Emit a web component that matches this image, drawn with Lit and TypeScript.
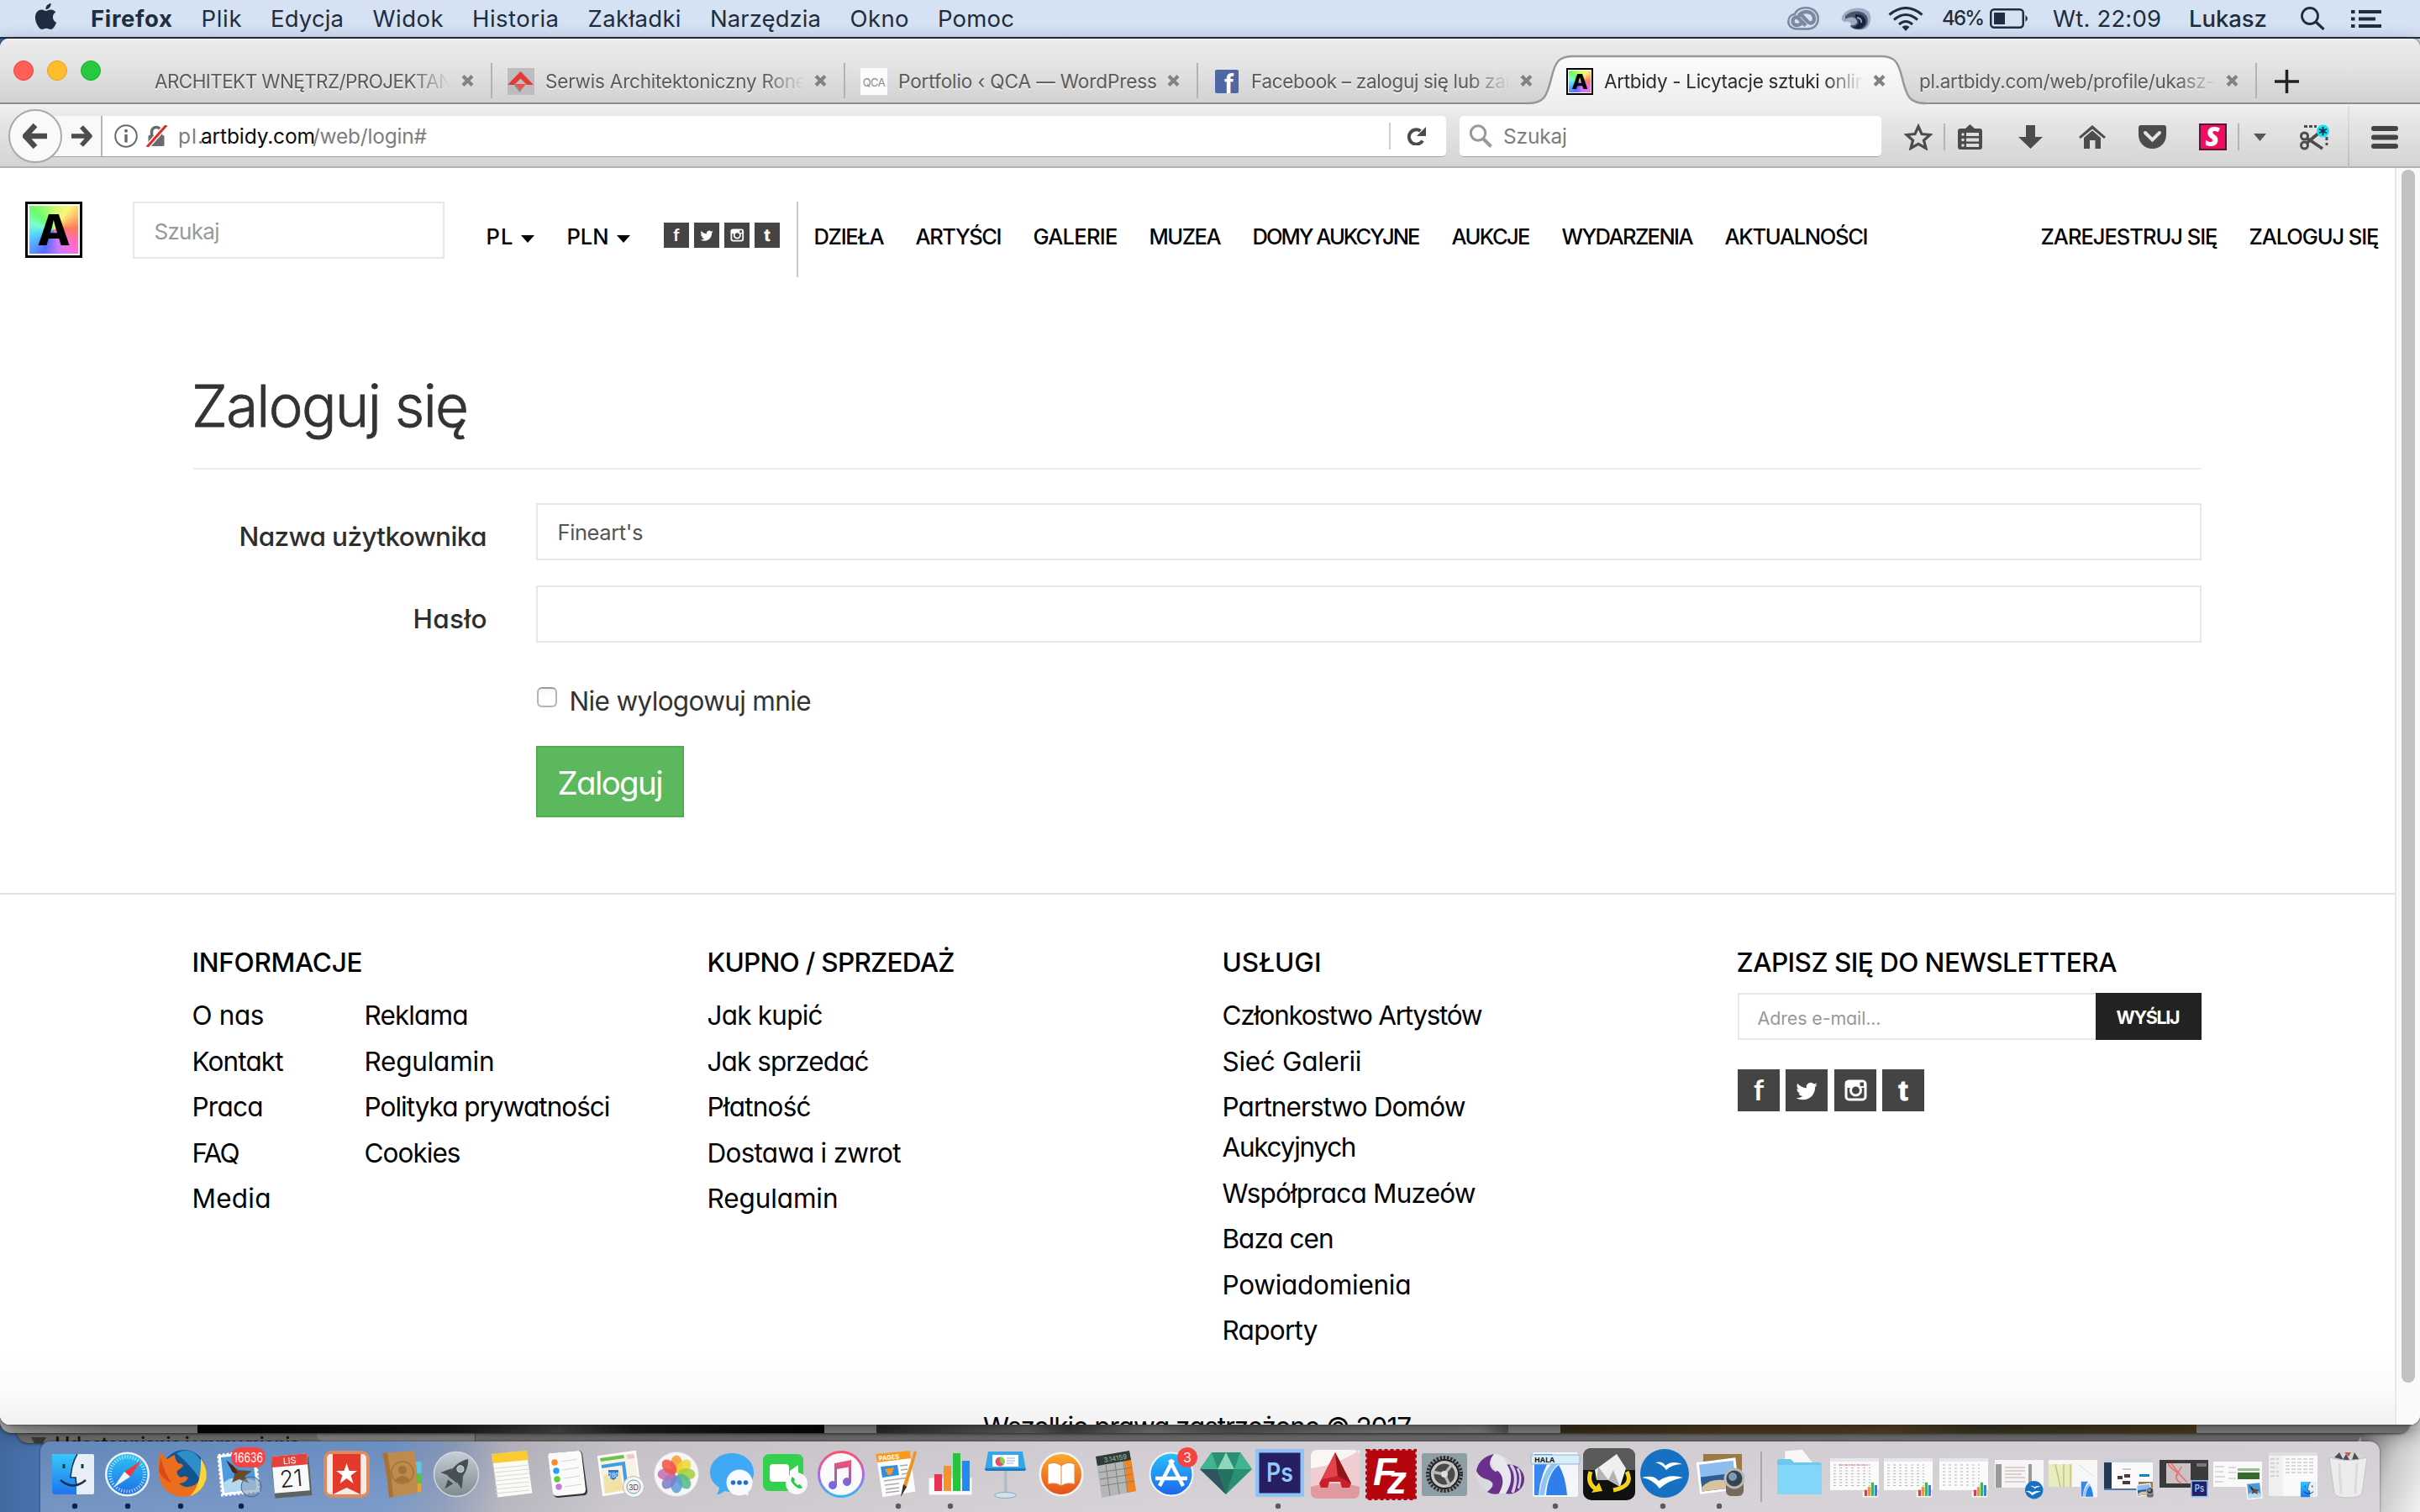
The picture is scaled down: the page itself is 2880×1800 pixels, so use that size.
import { LitElement, html, svg, css, nothing } from "lit";
import { customElement, property } from "lit/decorators.js";
import { classMap } from "lit/directives/class-map.js";

/** One line of text whose tracking is tuned so that it fills a given width. */
@customElement("fit-text")
class FitText extends LitElement {
  @property() text = "";
  @property({ type: Number }) w = 0;
  static styles = css`
    :host { display: inline-block; white-space: pre; flex: none; }
    .run { display: inline-block; margin-left: var(--bearing, 0px); }
  `;
  updated() {
    const run = this.renderRoot.querySelector(".run") as HTMLElement;
    run.style.letterSpacing = "0px";
    const natural = run.getBoundingClientRect().width;
    const n = Math.max(1, [...this.text].length - 1);
    run.style.letterSpacing = (this.w + 3 - natural) / n + "px";
    this.style.width = this.w + "px";
  }
  render() {
    return html`<span class="run">${this.text}</span>`;
  }
}

const fit = (text: string, w: number) => html`<fit-text .text=${text} .w=${w}></fit-text>`;
const icon = (w: number, h: number, body: unknown, box = `0 0 ${w} ${h}`) =>
  html`<svg class="ic" width=${w} height=${h} viewBox=${box}>${body}</svg>`;

const BIRD =
  "M23.953 4.57a10 10 0 01-2.825.775 4.958 4.958 0 002.163-2.723c-.951.555-2.005.959-3.127 1.184a4.92 4.92 0 00-8.384 4.482C7.69 8.095 4.067 6.13 1.64 3.162a4.822 4.822 0 00-.666 2.475c0 1.71.87 3.213 2.188 4.096a4.904 4.904 0 01-2.228-.616v.06a4.923 4.923 0 003.946 4.827 4.996 4.996 0 01-2.212.085 4.936 4.936 0 004.604 3.417 9.867 9.867 0 01-6.102 2.105c-.39 0-.779-.023-1.17-.067a13.995 13.995 0 007.557 2.209c9.053 0 13.998-7.496 13.998-13.985 0-.21 0-.42-.015-.63A9.935 9.935 0 0024 4.59z";
const APPLE =
  "M12.152 6.896c-.948 0-2.415-1.078-3.96-1.04-2.04.027-3.91 1.183-4.961 3.014-2.117 3.675-.546 9.103 1.519 12.09 1.013 1.454 2.208 3.09 3.792 3.039 1.52-.065 2.09-.987 3.935-.987 1.831 0 2.35.987 3.96.948 1.637-.026 2.676-1.48 3.676-2.948 1.156-1.688 1.636-3.325 1.662-3.415-.039-.013-3.182-1.221-3.22-4.857-.026-3.04 2.48-4.494 2.597-4.559-1.429-2.09-3.623-2.324-4.39-2.376-2-.156-3.675 1.09-4.61 1.09zM15.53 3.83c.843-1.012 1.4-2.427 1.245-3.83-1.207.052-2.662.805-3.532 1.818-.78.896-1.454 2.338-1.273 3.714 1.338.104 2.715-.688 3.559-1.701";

/* ------------------------------------------------------------ menu bar */

@customElement("menu-bar")
class MenuBar extends LitElement {
  static styles = css`
    :host { display: flex; align-items: center; height: 44px; background: #d5e2f4; color: #1f2d40;
      border-bottom: 2px solid #1b2f4f; font: 400 27.5px/44px Inter, "Liberation Sans", sans-serif; box-sizing: content-box; }
    .ic { display: block; flex: none; }
    .apple { padding: 0 38px 5px 39px; }
    .menus { display: flex; gap: 37.5px; }
    .app { font-weight: 700; }
    .status { display: flex; align-items: center; margin-left: auto; padding-right: 46px; }
    .cc { margin-right: 25px; }
    .eye { margin-right: 20px; }
    .wifi { margin-right: 23px; }
    .pct { font-size: 24px; font-weight: 500; margin-right: 8px; --bearing: -1px; }
    .bat { margin-right: 29px; }
    .clock { margin-right: 36px; }
    .user { font-weight: 500; margin-right: 43px; }
    .find { margin-right: 31px; }
  `;
  render() {
    const menus: [string, number][] = [["Plik", 45], ["Edycja", 84], ["Widok", 81], ["Historia", 100], ["Zakładki", 108], ["Narzędzia", 129], ["Okno", 67], ["Pomoc", 88]];
    return html`
      <div class="apple">${icon(31, 31, svg`<path fill="#1f2d40" d=${APPLE}/>`, "0 0 24 24")}</div>
      <div class="menus">
        <span class="app">${fit("Firefox", 94)}</span>
        ${menus.map(([t, w]) => fit(t, w))}
      </div>
      <div class="status">
        <span class="cc">${icon(38, 28, svg`<g fill="none" stroke="#7c8aa0">
          <path stroke-width="2.600" d="M12 26.500C5 26.500 1.300 22.500 1.300 17.500C1.300 12 5.500 9.300 9 8.800C11 4 16 1.300 22 1.300C31 1.300 36.700 7 36.700 14C36.700 21.500 31.500 26.500 24 26.500Z"/>
          <path stroke-width="4.400" d="M22 22.500L13 13.500C9.500 11 6.500 14 6.500 17.500C6.500 20.500 9 22 12 22C14 22 15.500 21 17 19.500"/>
          <path stroke-width="4.400" d="M17 10L25 18.500C29 21 32 18 32 14C32 9.500 28 6 23 6C18 6 15 8.500 13.500 11.500"/></g>`)}</span>
        <span class="eye">${icon(37, 28, svg`<path d="M2 12C6 2 24-2 33 5C38 10 37 20 32 25C27 29 15 28 12 24C14 21 12 17 7 18C2 18 1 15 2 12Z" fill="#9dacc2"/>
          <path d="M6 11C14 3 28 4 32 12C35 20 30 27 22 27C17 27 13 25 12 22C20 23 22 18 18 14C14 11 9 13 6 15Z" fill="#45556d"/>
          <path d="M18 9C26 8 32 14 30 20C28 26 20 28 15 24C22 23 25 17 18 13Z" fill="#17233a"/><path d="M20 13q6 1 5 6" fill="none" stroke="#8fa0b8" stroke-width="2"/>`)}</span>
        <span class="wifi">${icon(42, 29, svg`<g fill="none" stroke="#1f2d40" stroke-width="3"><path d="M1.500 9.500Q21-6.500 40.500 9.500"/><path d="M7 15.500Q21 3.500 35 15.500"/><path d="M13 21Q21 14 29 21"/></g><path d="M21 29l-4.500-5q4.500-3.500 9 0z" fill="#1f2d40"/>`)}</span>
        <span class="pct">${fit("46%", 48)}</span>
        <span class="bat">${icon(46, 24, svg`<rect x="1.250" y="1.250" width="38.500" height="21.500" rx="4" fill="none" stroke="#1f2d40" stroke-width="2.500"/><rect x="5" y="5" width="13" height="14" fill="#1f2d40"/><path d="M42.500 8q5 4 0 8z" fill="#1f2d40"/>`)}</span>
        <span class="clock">${fit("Wt. 22:09", 126)}</span>
        <span class="user">${fit("Lukasz", 90)}</span>
        <span class="find">${icon(29, 28, svg`<circle cx="11" cy="11" r="9.500" fill="none" stroke="#1f2d40" stroke-width="2.800"/><path d="M18 18l9.500 9" stroke="#1f2d40" stroke-width="3.200"/>`)}</span>
        ${icon(36, 21, svg`<g fill="#1f2d40"><rect width="4.500" height="4"/><rect x="9" width="27" height="4"/><rect y="8.500" width="4.500" height="4"/><rect x="9" y="8.500" width="20" height="4"/><rect y="17" width="4.500" height="4"/><rect x="9" y="17" width="27" height="4"/></g>`)}
      </div>`;
  }
}

/* ------------------------------------------------------ artbidy emblem */

@customElement("art-mark")
class ArtMark extends LitElement {
  static styles = css`
    :host { display: block; box-sizing: border-box; width: 68px; height: 67px; border: 3px solid #000; padding: 2px; background: #fff; flex: none; }
    .hue { width: 100%; height: 100%; display: flex; align-items: center; justify-content: center; color: #000;
      background: conic-gradient(#c9fb70, #fdf57a 35deg, #ff7a5a 85deg, #ff6ad5 130deg, #c97aff 165deg, #5a6bff 205deg, #55d4ff 255deg, #7bffca 285deg, #6dfb6b 315deg, #c9fb70);
      font: 800 51px/56px Inter, "Liberation Sans", sans-serif; }
    :host([small]) { width: 32px; height: 32px; border-width: 2px; padding: 1px; }
    :host([small]) .hue { font-size: 25px; line-height: 26px; }
  `;
  render() { return html`<div class="hue">A</div>`; }
}

/* --------------------------------------------------------- browser top */

@customElement("tab-strip")
class TabStrip extends LitElement {
  static styles = css`
    :host { display: flex; box-sizing: border-box; padding-left: 16px; background: linear-gradient(#f4f4f4 0, #ebebeb 4px, #e4e4e4 40%, #d2d2d2 100%);
      border-bottom: 2px solid #8e8e8e; height: 78px; font: 400 22.5px/50px Inter, "Liberation Sans", sans-serif; color: #5b5b5b; }
    .lights { display: flex; gap: 16px; width: 149px; padding-top: 26px; }
    .dot { width: 24px; height: 24px; border-radius: 50%; box-sizing: border-box; border: 1px solid #e2463f; background: #ff5f57; }
    .min { background: #ffbd2e; border-color: #dfa023; }
    .max { background: #28c940; border-color: #1bac2c; }
    .tab { position: relative; display: flex; align-items: center; width: 420px; height: 50px; margin-top: 26px; box-sizing: border-box; padding: 0 21px 0 19px; }
    .tab.line::after { content: ""; position: absolute; right: -1px; top: 3px; width: 2px; height: 42px; background: #b3b3b3; }
    .fav { margin-right: 13px; width: 32px; flex: none; display: flex; justify-content: center; position: relative; }
    .label { position: relative; text-shadow: 0 2px 0 #eee; }
    .label.fade { -webkit-mask-image: linear-gradient(90deg, #000 calc(100% - 48px), transparent); mask-image: linear-gradient(90deg, #000 calc(100% - 48px), transparent); }
    .x { margin-left: auto; position: relative; margin-bottom: 2px; }
    .active { color: #2c2c2c; }
    .hump { position: absolute; left: -35px; top: -8px; display: block; }
    .ic { display: block; }
    .plus { margin: 37px 0 0 22px; }
    .qca { width: 32px; height: 32px; background: #fcfcfc; color: #8b8b8b; font-size: 13px; line-height: 34px; text-align: center; letter-spacing: -.5px; }
  `;
  fav(kind: string) {
    if (kind === "ronet") return icon(32, 32, svg`<rect width="32" height="32" fill="#bdbdbf"/><path d="M15.500 4L31 20H23L15.500 12.500L8 20H0Z" fill="#e23b36"/><path d="M9 19h13l-6.500 8z" fill="#e8544c"/><path d="M9 20l6 8" stroke="#888" stroke-width="2"/>`);
    if (kind === "qca") return html`<div class="qca">QCA</div>`;
    if (kind === "fb") return icon(28, 28, svg`<rect width="28" height="28" rx="2" fill="#4f67a4"/><text x="11" y="28" font-family="Roboto" font-weight="700" font-size="31" fill="#fff">f</text>`);
    if (kind === "art") return html`<art-mark small></art-mark>`;
    return nothing;
  }
  render() {
    const tabs: [string, number, string, boolean, boolean][] = [
      ["ARCHITEKT WNĘTRZ/PROJEKTAN", 352, "", true, true],
      ["Serwis Architektoniczny Rone", 308, "ronet", true, true],
      ["Portfolio ‹ QCA — WordPress", 305, "qca", false, true],
      ["Facebook – zaloguj się lub zar", 308, "fb", true, false],
      ["Artbidy - Licytacje sztuki onlin", 309, "art", true, false],
      ["pl.artbidy.com/web/profile/ukasz-l", 354, "", true, true],
    ];
    return html`
      <div class="lights"><div class="dot"></div><div class="dot min"></div><div class="dot max"></div></div>
      ${tabs.map(([t, w, f, fade, line]) => html`
        <div class=${classMap({ tab: true, line, active: f === "art" })}>
          ${f === "art" ? html`<svg class="hump" width="490" height="62" viewBox="0 0 490 62">
            <defs><linearGradient id="hg" x2="0" y2="1"><stop stop-color="#fbfbfb"/><stop offset="1" stop-color="#eee"/></linearGradient></defs>
            <path d="M8 60C28 60 31 50 36 30C41 10 46 4 62 4H428C444 4 449 10 454 30C459 50 462 60 482 60V62H8Z" fill="url(#hg)"/>
            <path d="M8 59C28 59 31 50 36 30C41 8 46 3 62 3H428C444 3 449 8 454 30C459 50 462 59 482 59" fill="none" stroke="#979797" stroke-width="2.500"/></svg>` : nothing}
          ${f ? html`<div class="fav">${this.fav(f)}</div>` : nothing}
          <div class=${classMap({ label: true, fade })}>${fit(t, w)}</div>
          <div class="x">${icon(15, 14, svg`<path d="M2 1.500L13 12.500M13 1.500L2 12.500" stroke="#828282" stroke-width="4"/>`)}</div>
        </div>`)}
      <div class="plus">${icon(29, 28, svg`<path d="M14.500 0V28M0 14H29" stroke="#222" stroke-width="3.500"/>`)}</div>`;
  }
}

@customElement("tool-bar")
class ToolBar extends LitElement {
  static styles = css`
    :host { display: flex; height: 76px; box-sizing: border-box; border-bottom: 2px solid #b2b2b2; background: linear-gradient(#f2f2f2 0, #e9e9e9 12px, #d4d4d4 100%);
      font: 400 24.500px/48px Inter, "Liberation Sans", sans-serif; color: #7d7d7d; align-items: flex-start; }
    .ic { display: block; flex: none; }
    .back { position: relative; z-index: 1; width: 64px; height: 64px; margin: 6px -12px 0 10px; box-sizing: border-box; border: 2px solid #a9a9a9; border-radius: 50%; background: #fafafa; display: flex; align-items: center; justify-content: center; flex: none; }
    .url, .search { display: flex; align-items: center; height: 48px; margin-top: 14px; background: #fff; border-radius: 5px; border-bottom: 1px solid #a4a4a4; }
    .url { width: 1659px; border-radius: 0 5px 5px 0; flex: none; }
    .fwd { width: 60px; height: 48px; background: #f9f9f9; border-right: 2px solid #b5b5b5; display: flex; align-items: center; padding-left: 22px; box-sizing: border-box; margin-right: 14px; }
    .lock { margin: 0 13px 0 9px; }
    .host { color: #0a0a0a; }
    .reload { margin-left: auto; border-left: 2px solid #cfcfcf; padding: 5px 23px 5px 19px; }
    .search { width: 503px; margin-left: 16px; box-sizing: content-box; }
    .mag { margin: 0 13px 0 11px; }
    .tools { display: flex; align-items: center; height: 74px; flex: 1; padding: 2px 26px 0 27px; }
    .sep { width: 2px; height: 32px; background: #b5b5b5; }
    .tall { width: 2px; height: 74px; background: linear-gradient(#e2e2e2, #bcbcbc); margin: 0 26px 0 22px; }
    .a { margin: 0 15px 0 13px; } .b { margin-left: 43px; } .c { margin: 0 39px; } .s { margin-left: 13px; } .e { margin: 0 40px 0 17px; }
  `;
  render() {
    const g = "#4c4c4c";
    return html`
      <div class="back">${icon(30, 30, svg`<path d="M15 2L3 15L15 28M4 15H29" fill="none" stroke=${g} stroke-width="6.500" stroke-linejoin="round"/>`)}</div>
      <div class="url">
        <div class="fwd">${icon(26, 26, svg`<path d="M13 2L23 13L13 24M1 13H22" fill="none" stroke=${g} stroke-width="5.500" stroke-linejoin="round"/>`)}</div>
        ${icon(28, 28, svg`<circle cx="14" cy="14" r="12.800" fill="none" stroke="#696969" stroke-width="2"/><path d="M14 12V21.500" stroke="#696969" stroke-width="3.400"/><circle cx="14" cy="7.800" r="2" fill="#696969"/>`)}
        <div class="lock">${icon(26, 26, svg`<rect x="3.500" y="12" width="19" height="13" rx="1.500" fill="#6b6b6b"/><path d="M7.500 12V8a5.500 5.500 0 0 1 11 0v4" fill="none" stroke="#6b6b6b" stroke-width="3.600"/><path d="M25 0L2 26" stroke="#fff" stroke-width="6"/><path d="M25 0L2 26" stroke="#e02a22" stroke-width="3"/>`)}</div>
        ${fit("pl.", 27)}<span class="host">${fit("artbidy.com", 133)}</span>${fit("/web/login#", 133)}
        <div class="reload">${icon(24, 22, svg`<path d="M19 16.500A8.700 8.700 0 1 1 16.500 4.800" fill="none" stroke=${g} stroke-width="4"/><path d="M23 0V11H12Z" fill=${g}/>`)}</div>
      </div>
      <div class="search"><div class="mag">${icon(28, 28, svg`<circle cx="11" cy="10.500" r="8.700" fill="none" stroke="#999" stroke-width="3"/><path d="M17 17l9.500 9.500" stroke="#999" stroke-width="4"/>`)}</div>${fit("Szukaj", 73)}</div>
      <div class="tools">
        ${icon(34, 32, svg`<path d="M17 3.500L21 12.500L31 13.500L23.500 20L26 29.500L17 24.300L8 29.500L10.500 20L3 13.500L13 12.500Z" fill="none" stroke=${g} stroke-width="3.200"/>`)}
        <div class="sep a"></div>
        ${icon(29, 30, svg`<path d="M3 5H9L14.500 0L20 5H26Q29 5 29 8V27Q29 30 26 30H3Q0 30 0 27V8Q0 5 3 5Z" fill=${g}/><g fill="#dedede"><circle cx="6" cy="12" r="1.800"/><circle cx="6" cy="18.500" r="1.800"/><circle cx="6" cy="25" r="1.800"/><rect x="10" y="10" width="15" height="4"/><rect x="10" y="16.500" width="15" height="4"/><rect x="10" y="23" width="15" height="4"/></g>`)}
        <div class="b">${icon(29, 28, svg`<path d="M9 0H20V14H29L14.500 28L0 14H9Z" fill=${g}/>`)}</div>
        <div class="b">${icon(32, 28, svg`<path d="M16 0L32 14L30 16L16 4.500L2 16L0 14Z" fill=${g}/><path d="M16 6.500L26 15V28H19.500V18H13V28H6V15Z" fill=${g}/>`)}</div>
        <div class="c">${icon(33, 28, svg`<path d="M3 0H30Q33 0 33 3V11C33 21 26 28 16.500 28C7 28 0 21 0 11V3Q0 0 3 0Z" fill=${g}/><path d="M8 9L16.500 17.500L25 9" fill="none" stroke="#e4e4e4" stroke-width="4" stroke-linecap="round"/>`)}</div>
        <div>${icon(33, 32, svg`<rect x="1" y="1" width="31" height="30" fill="#ef0d63" stroke="#5e1334" stroke-width="2"/><text x="16" y="27" text-anchor="middle" font-family="Open Sans" font-style="italic" font-weight="800" font-size="31" fill="#fff">S</text>`)}</div>
        <div class="sep s"></div>
        <div class="e">${icon(15, 9, svg`<path d="M0 0H15L7.500 9Z" fill="#565656"/>`)}</div>
        ${icon(35, 32, svg`<g fill="none" stroke=${g} stroke-width="3"><circle cx="5.500" cy="15" r="4"/><circle cx="5.500" cy="26" r="4"/><path d="M8.500 23L23 11M8.500 17.500L27 30" stroke-width="3.600"/><path d="M5 3.500H20" stroke-dasharray="4 2"/><path d="M32 16V26" stroke-dasharray="4 3"/></g><circle cx="27.500" cy="9" r="7.500" fill="#12e3f0"/><path d="M27.500 4V14M23 6.500L32 11.500M32 6.500L23 11.500" stroke="#135" stroke-width="2"/>`)}
        <div class="tall"></div>
        ${icon(32, 27, svg`<g fill="#444"><rect width="32" height="6" rx="3"/><rect y="10.500" width="32" height="6" rx="3"/><rect y="21" width="32" height="6" rx="3"/></g>`)}
      </div>`;
  }
}

/* ------------------------------------------------------------ web page */

@customElement("social-links")
class SocialLinks extends LitElement {
  @property({ type: Number }) size = 30;
  @property({ type: Number }) gap = 6;
  static styles = css`
    :host { display: block; }
    .row { display: flex; }
    .ic { display: block; background: #444; }
  `;
  render() {
    const marks = [
      svg`<text x="25" y="37" text-anchor="middle" font-family="Lato" font-weight="700" font-size="34" fill="#fff">f</text>`,
      svg`<g transform="translate(12.500 13.500) scale(1.050)"><path d=${BIRD} fill="#fff"/></g>`,
      svg`<rect x="14" y="14" width="23" height="22" rx="3.500" fill="none" stroke="#fff" stroke-width="3"/><path d="M13 14h24v8h-24z" fill="#fff"/><rect x="30.500" y="15.500" width="4.500" height="4.500" fill="#444"/><circle cx="25.500" cy="25" r="6" fill="#444" stroke="#fff" stroke-width="3"/>`,
      svg`<text x="25" y="37" text-anchor="middle" font-family="Liberation Sans" font-weight="700" font-size="34" stroke="#fff" stroke-width="1" fill="#fff">t</text>`,
    ];
    return html`<div class="row" style="gap:${this.gap}px">${marks.map((m) => icon(this.size, this.size, m, "0 0 50 50"))}</div>`;
  }
}

@customElement("web-page")
class WebPage extends LitElement {
  static styles = css`
    :host { display: grid; grid-template-columns: 2850px 30px; height: 1496px; background: #fff; overflow: hidden; color: #000;
      font: 400 31.500px/48px Inter, "Liberation Sans", sans-serif; font-feature-settings: "cv11" 1; --bearing: -1.5px; }
    * { box-sizing: border-box; }
    .view { height: 1496px; overflow: hidden; background: linear-gradient(#fff 1410px, #fbfbfb 1455px, #f2f2f2 1496px); }
    .scroll { border-left: 2px solid #e8e8e8; background: #fafafa; padding: 2px 0 0 6px; }
    .thumb { width: 16px; height: 1444px; border-radius: 8px; background: #c1c1c1; }
    .ic { display: block; }
    header { display: flex; align-items: flex-start; padding: 40px 20px 0 30px; height: 130px; font: 500 25.500px/40px Inter, sans-serif; }
    .find { width: 371px; height: 68px; margin-left: 60px; border: 2px solid #e7e7e7; padding: 0 25px; font: 400 26px/68px Inter, sans-serif; color: #999; }
    .pick { display: flex; gap: 11px; padding-top: 22px; }
    .pick .ic { margin-top: 18px; }
    .pl { margin: 0 40px 0 51px; }
    .soc { margin: 25px 20px 0 40px; }
    .rule { width: 2px; height: 90px; background: #c8c8c8; margin-right: 20px; }
    nav { display: flex; gap: 40px; padding-top: 22px; }
    .account { margin-left: auto; }
    .form { width: 2390px; margin: 113px 0 0 230px; color: #333; }
    h1 { margin: 0; font: 300 69px/80px Inter, sans-serif; height: 116px; border-bottom: 2px solid #eee; -webkit-text-stroke: .8px #333; --bearing: -2px; }
    .row { display: grid; grid-template-columns: 348px 1982px; column-gap: 60px; margin-top: 30px; }
    .row.first { margin-top: 40px; }
    .row label { text-align: right; padding-top: 16px; font-weight: 500; color: #2e2e2e; }
    .box { height: 68px; border: 2px solid #e7e7e7; padding: 0 25px; font: 400 25.500px/66px Inter, sans-serif; color: #555; background: #fff; }
    .keep { display: flex; margin: 46px 0 0 409px; gap: 16px; }
    .check { width: 24px; height: 24px; border: 2px solid #b4b4b4; border-top-color: #9b9b9b; border-radius: 6px; background: linear-gradient(#f4f4f4, #fff 8px); margin-top: 7px; }
    .go { width: 176px; height: 85px; margin: 29px 0 0 408px; background: #5cb85c; border: 2px solid #4cae4c; color: #fff; padding-left: 25px; font-size: 38.500px; line-height: 84px; }
    footer { margin-top: 90px; border-top: 2px solid #e1e1e1; padding: 60px 0 0 230px; }
    .cols { display: grid; grid-template-columns: 613px 613px 612px 552px; height: 484px; }
    .h { font-weight: 500; line-height: 41px; height: 60px; }
    .links { display: flex; flex-direction: column; gap: 6.500px; }
    .pair { display: grid; grid-template-columns: 205px 1fr; }
    .links fit-text { display: block; }
    .mail { display: flex; height: 56px; margin-top: -3px; font-size: 23px; line-height: 56px; }
    .addr { width: 426px; border: 2px solid #e7e7e7; border-right: 0; padding-left: 23px; color: #999; line-height: 56px; font-size: 21.500px; }
    .send { width: 126px; background: #222; color: #fff; font-weight: 700; padding-left: 26px; font-size: 21.500px; line-height: 58px; }
    .fsoc { margin-top: 35px; }
    .copy { text-align: center; padding-right: 230px; margin-top: 66px; }
    .stack { line-height: 48px; }
  `;
  links(items: [string, number][]) {
    return html`<div class="links">${items.map(([t, w]) => fit(t, w))}</div>`;
  }
  render() {
    const caret = icon(16, 9, svg`<path d="M0 0H16L8 9Z"/>`);
    return html`
      <div class="view">
        <header>
          <art-mark></art-mark>
          <div class="find">${fit("Szukaj", 75)}</div>
          <div class="pick pl">${fit("PL", 29)}${caret}</div>
          <div class="pick">${fit("PLN", 47)}${caret}</div>
          <social-links class="soc" .size=${30} .gap=${6}></social-links>
          <div class="rule"></div>
          <nav>${fit("DZIEŁA", 81)}${fit("ARTYŚCI", 100)}${fit("GALERIE", 98)}${fit("MUZEA", 83)}${fit("DOMY AUKCYJNE", 197)}${fit("AUKCJE", 91)}${fit("WYDARZENIA", 154)}${fit("AKTUALNOŚCI", 168)}</nav>
          <nav class="account">${fit("ZAREJESTRUJ SIĘ", 208)}${fit("ZALOGUJ SIĘ", 152)}</nav>
        </header>
        <section class="form">
          <h1>${fit("Zaloguj się", 327)}</h1>
          <div class="row first"><label>${fit("Nazwa użytkownika", 292)}</label><div class="box">${fit("Fineart's", 99)}</div></div>
          <div class="row"><label>${fit("Hasło", 85)}</label><div class="box"></div></div>
          <div class="keep"><div class="check"></div>${fit("Nie wylogowuj mnie", 285)}</div>
          <div class="go">${fit("Zaloguj", 123)}</div>
        </section>
        <footer>
          <div class="cols">
            <div><div class="h">${fit("INFORMACJE", 200)}</div><div class="pair">
              ${this.links([["O nas", 83], ["Kontakt", 106], ["Praca", 82], ["FAQ", 54], ["Media", 91]])}
              ${this.links([["Reklama", 121], ["Regulamin", 152], ["Polityka prywatności", 290], ["Cookies", 112]])}</div></div>
            <div><div class="h">${fit("KUPNO / SPRZEDAŻ", 292)}</div>
              ${this.links([["Jak kupić", 135], ["Jak sprzedać", 190], ["Płatność", 121], ["Dostawa i zwrot", 228], ["Regulamin", 153]])}</div>
            <div><div class="h">${fit("USŁUGI", 115)}</div><div class="links">
              ${fit("Członkostwo Artystów", 307)}${fit("Sieć Galerii", 163)}
              <div class="stack">${fit("Partnerstwo Domów", 287)}${fit("Aukcyjnych", 157)}</div>
              ${fit("Współpraca Muzeów", 299)}${fit("Baza cen", 130)}${fit("Powiadomienia", 222)}${fit("Raporty", 111)}</div></div>
            <div><div class="h">${fit("ZAPISZ SIĘ DO NEWSLETTERA", 450)}</div>
              <div class="mail"><div class="addr">${fit("Adres e-mail...", 144)}</div><div class="send">${fit("WYŚLIJ", 73)}</div></div>
              <social-links class="fsoc" .size=${50} .gap=${7.4}></social-links></div>
          </div>
          <div class="copy">${fit("Wszelkie prawa zastrzeżone © 2017", 507)}</div>
        </footer>
      </div>
      <div class="scroll"><div class="thumb"></div></div>`;
  }
}

/* ---------------------------------------------------------------- dock */

const bars = svg`<rect x="1" y="31" width="52" height="21" fill="#fafafa" stroke="#ccc"/><rect x="8" y="27" width="9" height="20" fill="#e8324f"/><rect x="19" y="17" width="9" height="30" fill="#f7922b"/><rect x="30" y="2" width="9" height="45" fill="#27c53d"/><rect x="41" y="11" width="9" height="36" fill="#1f8af2"/>`;
const gull = svg`<circle cx="29" cy="29" r="29" fill="#1671c2"/><path d="M18 16Q27 14 30 20Q37 13 50 18Q38 18 31 25Q26 18 18 16ZM2 34Q16 30 22 38Q34 29 51 34Q34 37 23 47Q15 36 2 34Z" fill="#fff"/>`;
const finder = svg`<rect width="50" height="48" rx="2" fill="#e7eef7"/><path d="M2 0H30C24 10 23 19 22 28H29V48H2Q0 48 0 46V2Q0 0 2 0Z" fill="url(#fb)"/><path d="M14 12v5M36 12v5" stroke="#143" stroke-width="3"/><path d="M30 0C24 10 23 19 22 28H28L29 38" fill="none" stroke="#173350" stroke-width="1.500"/><path d="M10 31Q25 44 40 31" fill="none" stroke="#173350" stroke-width="2.400"/>`;
const psIcon = svg`<rect width="58" height="57" fill="#8fc3f8"/><rect x="4.500" y="4.500" width="49" height="48" fill="#261e60"/><text x="29" y="39" text-anchor="middle" font-family="Inter" font-weight="600" font-size="31" textLength="32" lengthAdjust="spacingAndGlyphs" fill="#8fc9ff">Ps</text>`;
const eagle = svg`<g transform="rotate(-6 24 26)"><rect x="2" y="2" width="44" height="48" fill="#fff" stroke="#fff" stroke-width="3" stroke-dasharray="3 2"/><rect x="5" y="5" width="38" height="42" fill="#4c9be0"/><path d="M5 35Q20 25 43 37V47H5Z" fill="#b4daf2"/><path d="M11 9L24 22L40 25L31 30L35 39L24 33L15 36L19 27Z" fill="#6b4a2b"/><path d="M11 9L19 17L23 26L17 24Z" fill="#3d2a1c"/></g>`;
const photo = svg`<rect x="8" y="0" width="46" height="40" fill="#9c7a46"/><g transform="rotate(-7 26 28)"><rect x="2" y="7" width="47" height="38" fill="#fff"/><rect x="5" y="10" width="41" height="32" fill="#8dbdf0"/><path d="M5 25H46V42H5Z" fill="#2e5d95"/><path d="M5 37Q18 25 46 36V42H5Z" fill="#d8c2a0"/></g><rect x="35" y="30" width="21" height="20" rx="6" fill="#77695d"/><circle cx="45" cy="29" r="11" fill="#37424e" stroke="#b9b9b9" stroke-width="3"/><circle cx="43" cy="27" r="5" fill="#7f9ab5"/>`;
const arch = svg`<rect width="54" height="53" rx="2" fill="#f3f7fc"/><path d="M2 51V2H24Q9 24 7 51Z" fill="#3a86f0"/><path d="M8 51Q11 22 28 8L32 12Q16 26 14 51Z" fill="#8fc4f4"/><path d="M16 51Q18 25 31 15Q39 28 41 51Z" fill="#2f7eec"/>`;

const page = (n: number, tone = "#b8b8b8") => svg`<rect width="58" height="38" fill="#fbfbfb"/><rect width="58" height="4" fill="#e5e7ea"/><g stroke=${tone} stroke-width="1.200" stroke-dasharray="3 4">${Array.from({ length: n }, (_, i) => svg`<path d="M4 ${8 + (i * 28) / n}H48"/>`)}</g>`;

interface Item { end: number; x: number; y: number; art: unknown; dot?: boolean; }
const ITEMS: Item[] = [
  { end: 119, x: 62, y: 1731, dot: true, art: finder },
  { end: 183, x: 125, y: 1728, dot: true, art: svg`<circle cx="26.500" cy="27" r="26.500" fill="#f1f1f1"/><circle cx="26.500" cy="27" r="24" fill="url(#sf)"/><circle cx="26.500" cy="27" r="20.500" fill="none" stroke="#cfe9fb" stroke-width="4" stroke-dasharray="1 2.200"/><path d="M43 11L30 30L23 24Z" fill="#f03a3a"/><path d="M10 43L30 30L23 24Z" fill="#f3f3f3"/>` },
  { end: 252, x: 188, y: 1725, dot: true, art: svg`<circle cx="31" cy="27" r="26" fill="#13538f"/><path d="M22 5Q36-3 47 8Q58 22 50 36Q40 20 22 5Z" fill="#2d8ec8"/><path d="M3 4Q8 9 11 12Q17 8 20 7Q20 12 24 17Q29 17 30 20Q28 23 24 25Q20 29 27 34Q32 31 36 34Q33 41 25 41Q34 49 45 42Q55 34 51 13Q60 24 57 37Q51 56 31 57Q6 56 1 32Q-1 14 3 4Z" fill="#ec6d1e"/><path d="M51 11Q60 24 57 37Q52 52 38 56Q52 43 51 11Z" fill="#fcd33a"/><path d="M3 10Q8 30 16 40Q5 36 1 26Z" fill="#d84a18"/>` },
  { end: 318, x: 260, y: 1728, dot: true, art: svg`${eagle}<circle cx="39" cy="42" r="12" fill="#7e97b9" fill-opacity=".55" stroke="#48658c"/><rect x="15" y="-5" width="41" height="24" rx="12" fill="#f8423f"/><text x="35.500" y="13" text-anchor="middle" font-family="Inter" font-size="16" textLength="35" lengthAdjust="spacingAndGlyphs" fill="#fff">16636</text>` },
  { end: 379, x: 322, y: 1728, art: svg`<g transform="rotate(-5 25 27)"><path d="M2 8L3 54H47V8Z" fill="#5b6363"/><rect x="3" y="4" width="42" height="44" fill="#fafafa"/><rect x="3" y="4" width="42" height="13" fill="#e5413e"/><text x="24" y="14.500" text-anchor="middle" font-family="Inter" font-size="10.500" fill="#fff">LIS</text><text x="24" y="42" text-anchor="middle" font-family="Inter" font-weight="300" font-size="28" textLength="27" lengthAdjust="spacingAndGlyphs" fill="#222">21</text></g>` },
  { end: 448, x: 385, y: 1727, art: svg`<rect width="55" height="56" rx="10" fill="#e08a5c"/><rect x="4" y="4" width="47" height="48" rx="5" fill="#f4ece6"/><path d="M11 4H44V52L27.500 44L11 52Z" fill="#e53a2b"/><path d="M27.500 15L30.500 24H40L32.500 29.500L35.500 39L27.500 33L19.500 39L22.500 29.500L15 24H24.500Z" fill="#fff"/>` },
  { end: 510, x: 455, y: 1727, art: svg`<g transform="rotate(4 24 28)"><rect x="38" y="12" width="8" height="14" fill="#61c4e7"/><rect x="38" y="26" width="9" height="12" fill="#57c242"/><rect x="38" y="38" width="9" height="10" fill="#f3a323"/></g><path d="M0 3L38 0Q42 24 42 50L8 56Q6 28 0 3Z" fill="#be8b4c"/><path d="M0 3L6 2Q11 28 13 55L8 56Q6 28 0 3Z" fill="#a67337"/><circle cx="24" cy="26" r="13" fill="none" stroke="#a1733a" stroke-width="1.500"/><circle cx="24" cy="23" r="5" fill="#a1733a"/><path d="M15 35Q24 25 33 35Q24 41 15 35Z" fill="#a1733a"/>` },
  { end: 577, x: 516, y: 1728, art: svg`<circle cx="27" cy="27" r="26.500" fill="url(#rk)" stroke="#cfd8df" stroke-width="1.500"/><g transform="rotate(38 27 27)"><path d="M27 4Q37 16 34 35H20Q17 16 27 4Z" fill="#474f56"/><path d="M19 24L11 37L20 34ZM35 24L43 37L34 34ZM23 38H31L27 49Z" fill="#474f56"/><circle cx="27" cy="19" r="4" fill="#a8b5bd" stroke="#d7dfe3"/></g>` },
  { end: 642, x: 585, y: 1727, art: svg`<path d="M0 4L42 0L49 51L7 56Z" fill="#fbfaf5" stroke="#bbb"/><path d="M0 4L42 0L44 11L2 15Z" fill="#fbcb33"/><g stroke="#d8d8d8">${[18, 23, 28, 33, 38, 43, 48].map((y) => svg`<path d="M4 ${y + 3}L45 ${y - 1}"/>`)}</g>` },
  { end: 705, x: 651, y: 1727, art: svg`<path d="M4 3L38 0Q41 0 42 4L48 48Q48 52 45 53L13 56Q9 56 8 52L1 7Q1 4 4 3Z" fill="#333"/><path d="M3 3L37 0Q40 0 41 4L46 46Q46 50 43 51L12 54Q8 54 7 50L1 7Q1 4 3 3Z" fill="#fbfbfb"/><circle cx="9" cy="14" r="3.700" fill="#f98a2a"/><circle cx="11" cy="24" r="3.700" fill="#21a3ee"/><circle cx="12" cy="34" r="3.700" fill="#5bcf37"/><circle cx="14" cy="43" r="3.700" fill="#c277e2"/><path d="M16 13L36 10M18 23L38 20M20 33L39 30M21 43L41 40" stroke="#d5d5d5"/>` },
  { end: 772, x: 712, y: 1728, art: svg`<path d="M0 6L44 0L50 45L6 52Z" fill="#f7f2e4" stroke="#fff" stroke-width="2"/><path d="M2 8L30 4L31 8L3 12Z" fill="#6cc24a"/><path d="M34 4L42 3L43 8L35 9Z" fill="#f3c3cf"/><path d="M4 18L30 14L34 46" fill="none" stroke="#3f9de8" stroke-width="4"/><path d="M6 28L26 24L30 46L8 50Z" fill="#f3e2a8"/><path d="M12 22H24V29Q20 33 18 34Q12 31 12 27Z" fill="#3b78c9"/><text x="18" y="31" text-anchor="middle" font-family="Inter" font-size="7" fill="#fff">280</text><circle cx="42" cy="42" r="12.500" fill="#f5f5f5" stroke="#bbb"/><circle cx="42" cy="42" r="8" fill="none" stroke="#5f9cc0"/><text x="42" y="45.500" text-anchor="middle" font-family="Inter" font-size="9" fill="#444">3D</text>` },
  { end: 838, x: 778, y: 1728, art: svg`<circle cx="27" cy="27" r="26.500" fill="#f6f6f6" stroke="#d5d5d5"/>${["#f79a2f", "#f1d62e", "#a4cf3c", "#53ba8b", "#5b9fd6", "#7e7cc7", "#c46bb0", "#ef5347"].map((c, i) => svg`<ellipse cx="27" cy="15" rx="7" ry="10.500" fill=${c} fill-opacity=".85" transform="rotate(${i * 45} 27 27)"/>`)}` },
  { end: 903, x: 844, y: 1729, art: svg`<path d="M27 1C42 1 53 11 53 24C53 37 42 47 27 47Q22 47 18 46Q14 50 9 50Q12 46 12 42Q1 35 1 24C1 11 12 1 27 1Z" fill="#3fa9f5"/><circle cx="36" cy="36" r="15.500" fill="#f7fbff"/><path d="M42 48l4 4l1-7z" fill="#f7fbff"/><g fill="#1d73c9"><circle cx="28.500" cy="36" r="2.800"/><circle cx="36" cy="36" r="2.800"/><circle cx="43.500" cy="36" r="2.800"/></g>` },
  { end: 967, x: 908, y: 1731, art: svg`<rect width="48" height="44" rx="7" fill="#34d14e"/><rect x="8" y="12" width="23" height="21" rx="4" fill="#fff"/><path d="M32 20L42 13V31L32 25Z" fill="#fff"/><circle cx="40" cy="35" r="13" fill="#f8f8f8"/><path d="M35 27Q31 31 37 37Q43 43 47 40L44 36L41 37L37 33L38 30Z" fill="#2bc747"/>` },
  { end: 1035, x: 973, y: 1727, art: svg`<circle cx="28" cy="28" r="26.500" fill="#fafafa" stroke="url(#it)" stroke-width="3"/><path d="M20 15L40 11V37A5 5 0 1 1 37 32.500V19.500L23 22V41A5 5 0 1 1 20 36.500Z" fill="url(#nt)"/>` },
  { end: 1097, x: 1042, y: 1727, dot: true, art: svg`<path d="M0 4L41 0L48 49L8 56Z" fill="#fcfcfc" stroke="#ccc"/><path d="M0 4L41 0L42 9L2 14Z" fill="#f79a1f"/><text x="4" y="12" font-family="Inter" font-weight="700" font-size="7.500" fill="#fff" transform="rotate(-6 4 12)">PAGES</text><path d="M6 19L26 17L28 29L8 32Z" fill="#2f8fe0"/><path d="M11 22L22 20L19 28L15 29Z" fill="#ff9821"/><path d="M29 18L38 17M30 23L38 22M31 28L38 27M10 36L40 32M11 41L28 39M12 46L28 44M12 50L28 48" stroke="#aaa" stroke-width="1.500"/><path d="M46 0L33 41L30 55L37 43L49 2Z" fill="#ee9421"/><path d="M33 40L30 55L37 43Z" fill="#333"/>` },
  { end: 1165, x: 1104, y: 1728, dot: true, art: bars },
  { end: 1229, x: 1172, y: 1728, art: svg`<path d="M4 0H45L49 22H0Z" fill="#36a5ea"/><path d="M0 20H49L48 23H1Z" fill="#197cc0"/><rect x="9" y="4" width="31" height="14" fill="#fff"/><circle cx="18" cy="12" r="5.500" fill="#e64a76"/><path d="M18 12V6.500A5.500 5.500 0 0 1 22 16Z" fill="#7bd44a"/><path d="M26 8h10M26 11h10M26 14h8" stroke="#9ad" stroke-width="1"/><rect x="23" y="23" width="3.500" height="28" fill="#aebfca"/><ellipse cx="24.500" cy="52" rx="13" ry="3.500" fill="#cfe2ee" stroke="#8ca6b7"/>` },
  { end: 1297, x: 1236, y: 1728, art: svg`<circle cx="27" cy="27" r="26.500" fill="#f4f4f4"/><circle cx="27" cy="27" r="24" fill="url(#ib)"/><path d="M27 17Q20 11 11 15V39Q20 36 27 41Q34 36 43 39V15Q34 11 27 17ZM27 17V41" fill="#fff" stroke="#e8832d"/>` },
  { end: 1360, x: 1304, y: 1727, art: svg`<path d="M0 7L40 0L48 48L7 56Z" fill="#b4b6b8"/><path d="M34 12L42 10L48 48L38 50Z" fill="#f58220"/><path d="M0 7L40 0L42 11L2 18Z" fill="#2d3a36"/><text x="10" y="14" font-family="Inter" font-size="8" fill="#9fb8ac" transform="rotate(-9 10 14)">3.14159</text><path d="M4 26L43 20M5 34L44 28M6 42L46 36M12 17L17 54M23 15L28 52M33 13L38 50" stroke="#7e8082" fill="none"/>` },
  { end: 1426, x: 1367, y: 1728, art: svg`<circle cx="27" cy="27" r="26.500" fill="#f4f4f4"/><circle cx="27" cy="27" r="24.500" fill="url(#as)"/><path d="M25 10L41 41M29 10L13 41M8 32H46" stroke="#fff" stroke-width="4.500"/><circle cx="46" cy="7" r="12" fill="#f8423f"/><text x="46" y="12.500" text-anchor="middle" font-family="Inter" font-size="16" fill="#fff">3</text>` },
  { end: 1492, x: 1428, y: 1729, art: svg`<path d="M14 0H48L62 20L31 50L0 20Z" fill="#2a8f73"/><path d="M14 0L21 20H0ZM48 0L41 20H62Z" fill="#3fb592"/><path d="M31 0L21 20H41Z" fill="#8fd6bb"/><path d="M0 20H21L31 50Z" fill="#2d5562"/><path d="M21 20H41L31 50Z" fill="#247360"/>` },
  { end: 1556, x: 1494, y: 1725, dot: true, art: psIcon },
  { end: 1621, x: 1560, y: 1726, art: svg`<rect width="58" height="58" rx="8" fill="#f0cdd0"/><path d="M0 22Q32 18 58 0V8Q58 0 50 0H8Q0 0 0 8Z" fill="#fbf6f6"/><path d="M0 44Q30 36 58 44V50Q58 58 50 58H8Q0 58 0 50Z" fill="#e09a9f"/><path d="M29 3L48 40L46 45H37L35 38H22L20 45H12L10 40Z" fill="#c8202a"/><path d="M29 3L32 31L13 35Z" fill="#e2444b"/><path d="M29 3L48 40L32 31Z" fill="#941219"/>` },
  { end: 1689, x: 1625, y: 1725, art: svg`<rect x="1.500" y="1.500" width="58" height="58" fill="#b5060d" stroke="#b5060d" stroke-width="3" stroke-dasharray="4 3"/><g fill="#fff" font-family="Liberation Sans" font-weight="700" font-style="italic"><text x="9" y="43" font-size="46">F</text><text x="26" y="53" font-size="46">z</text></g>` },
  { end: 1751, x: 1692, y: 1730, art: svg`<rect width="54" height="51" rx="3" fill="#8f9da4"/><circle cx="27" cy="25" r="20" fill="none" stroke="#2c2c2c" stroke-width="4" stroke-dasharray="2.500 1.700"/><circle cx="27" cy="25" r="17" fill="#c8c8c8" stroke="#222" stroke-width="2"/><circle cx="27" cy="25" r="12.500" fill="#4a4a4a"/><path d="M27 25L11 22M27 25L37 12M27 25L34 40" stroke="#b9b9b9" stroke-width="3.500"/><circle cx="27" cy="25" r="4" fill="#ddd"/>` },
  { end: 1818, x: 1756, y: 1731, art: svg`<circle cx="24" cy="24" r="23" fill="#d9d9de"/><ellipse cx="40" cy="30" rx="18" ry="17.500" fill="#63338a"/><path d="M1 20Q4 4 22 0Q12 12 22 20Q38 26 28 47Q20 49 14 45Q26 36 16 31Q4 28 1 20Z" fill="#6b2f8c"/><path d="M22 0Q34 0 37 12Q48 28 36 47H28Q38 28 25 19Q14 10 22 0Z" fill="#e9e7ee"/><path d="M42 13Q52 26 44 46" fill="none" stroke="#d8cfe2" stroke-width="3.500"/><path d="M50 17Q56 27 51 41" fill="none" stroke="#d8cfe2" stroke-width="2.500"/>` },
  { end: 1881, x: 1824, y: 1729, dot: true, art: svg`${arch}<rect x="-2" y="3" width="58" height="11" rx="2" fill="#d8ecf9" stroke="#8ab4cf"/><text x="2" y="12" font-family="Open Sans" font-weight="700" font-size="9" textLength="24" lengthAdjust="spacingAndGlyphs" fill="#111">HALA</text>` },
  { end: 1949, x: 1884, y: 1724, art: svg`<rect width="62" height="62" rx="10" fill="#111"/><path d="M0 10Q0 0 10 0H52Q62 0 62 10V26H0Z" fill="#5a5a5a"/><path d="M14 26L40 7L51 24L44 46L30 38L16 38Z" fill="#efefef"/><path d="M18 22L30 38L16 38ZM30 38L36 26L44 46Z" fill="#b4b4b4"/><path d="M9 28Q4 42 16 49" fill="none" stroke="#f5d21c" stroke-width="5"/><path d="M10 53L23 51L19 41Z" fill="#f5d21c"/><path d="M52 28Q61 45 36 50" fill="none" stroke="#f5d21c" stroke-width="5"/>` },
  { end: 2013, x: 1952, y: 1725, dot: true, art: gull },
  { end: 2086, x: 2019, y: 1731, dot: true, art: photo },
  { end: 2106, x: 2095, y: 1728, art: svg`<rect width="2" height="60" fill="#aaa5aa"/>` },
  { end: 2174, x: 2115, y: 1725, art: svg`<path d="M9 2L30 0L44 18H8Z" fill="#f7f7f7" stroke="#ccc"/><path d="M0 15Q0 12 3 12H16L20 16H50Q53 16 53 19V54H0Z" fill="#6cc9ee"/><rect y="19" width="53" height="35" rx="1" fill="#82d6f7"/>` },
  { end: 2239, x: 2178, y: 1736, art: svg`${page(8)}<path d="M10 8H46" stroke="#d66" stroke-dasharray="2 1"/><g transform="translate(38 28) scale(.36)">${bars}</g>` },
  { end: 2304, x: 2242, y: 1736, art: svg`${page(8)}<g transform="translate(38 28) scale(.36)">${bars}</g>` },
  { end: 2370, x: 2308, y: 1736, art: svg`${page(7)}<g transform="translate(38 28) scale(.36)">${bars}</g>` },
  { end: 2435, x: 2374, y: 1738, art: svg`<rect width="58" height="33" fill="#f5f5f5"/><rect x="1" y="5" width="7" height="28" fill="#999"/><rect x="40" y="5" width="4" height="28" fill="#999"/><path d="M12 9H36M12 13H36M12 17H32M12 21H36M12 26H36" stroke="#c7aaaa"/><g transform="translate(36 25) scale(.37)">${gull}</g>` },
  { end: 2500, x: 2438, y: 1738, art: svg`<rect width="58" height="32" fill="#f7f7f5"/><rect y="5" width="28" height="27" fill="#e6eec0"/><path d="M18 5V32M26 5V32M8 5L14 32" stroke="#d2c078" stroke-width="1.500"/><path d="M36 6L54 20" stroke="#cde"/><g transform="translate(38 25) scale(.37)">${arch}</g>` },
  { end: 2566, x: 2504, y: 1736, art: svg`<rect width="58" height="38" fill="#fafafa"/><rect width="58" height="5" fill="#c8cfd8"/><rect y="5" width="9" height="32" fill="#233a59"/><rect y="36" width="58" height="2" fill="#5576a8"/><path d="M16 21h6v4h-6zM24 19h7v4h-7zM22 27h9v4h-9z" fill="#4d3a35"/><rect x="42" y="19" width="12" height="3" fill="#1b7fc4"/><path d="M22 13h10" stroke="#999"/><g transform="translate(38 28) scale(.37)">${photo}</g>` },
  { end: 2631, x: 2570, y: 1738, art: svg`<rect width="58" height="33" fill="#3b3b3d"/><rect x="8" y="4" width="29" height="24" fill="#cbc3c3"/><path d="M10 5Q18 14 22 15Q16 22 26 28M14 4L23 16L33 27M26 8L20 20" fill="none" stroke="#e87070" stroke-width="1.600"/><rect x="44" y="4" width="12" height="4" fill="#777"/><g transform="translate(37 24) scale(.36)">${psIcon}</g>` },
  { end: 2696, x: 2634, y: 1740, art: svg`<rect width="58" height="30" fill="#f9f9f9"/><path d="M2 6H13M2 12H12M2 18H14M2 24H12M18 7H27M18 13H27M18 20H27" stroke="#bbb"/><rect x="29" y="8" width="26" height="3" fill="#8fc48c"/><rect x="29" y="13" width="26" height="8" fill="#356b2c"/><g transform="translate(39 24) scale(.4)">${eagle}</g>` },
  { end: 2765, x: 2700, y: 1729, art: svg`<rect width="58" height="52" fill="#fafafa"/><rect width="58" height="4" fill="#dedede"/><rect y="4" width="17" height="48" fill="#efefef"/><path d="M2 8H12M2 13H12M2 18H10M2 23H12M2 28H12M20 8H54M20 12H54M20 16H54M20 20H54M20 24H54" stroke="#b5b5b5" stroke-dasharray="5 2"/><g transform="translate(38 35) scale(.38)">${finder}</g>` },
  { end: 2832, x: 2772, y: 1726, art: svg`<path d="M2 6L9 2L14 5L22 0L30 5L37 2L42 8L38 14H5Z" fill="#d5d5d5"/><path d="M6 9L12 3L17 12ZM20 5L24 12H16ZM30 3L36 12H27Z" fill="#4a4f55"/><path d="M18 3L23 8L26 3Z" fill="#c9564a"/><path d="M0 9Q22 16 45 9L39 52Q36 57 22 57Q9 57 6 52Z" fill="#efefef" fill-opacity=".88" stroke="#c3c3c3"/><path d="M12 16L14 52M33 16L31 52" stroke="#dcdcdc" stroke-width="3"/>` },
];

@customElement("app-dock")
class AppDock extends LitElement {
  static styles = css`
    :host { display: flex; height: 84px; width: 2784px; border-radius: 12px 12px 0 0; box-shadow: 0 0 3px rgba(0,0,0,.5);
      background: linear-gradient(rgba(255,255,255,0), rgba(255,255,255,.12)), linear-gradient(96deg, #6487b9 0, #6a8ec3 15%, #8594b3 17.500%, #b1aeb9 20%, #c5c1c7 25%, #d0ccd1 45%, #d3cfd4 100%); }
    .cell { display: block; flex: none; overflow: visible; }
  `;
  render() {
    let start = 48;
    return html`${ITEMS.map((it, i) => {
      const w = it.end - start;
      const x = it.x - start;
      start = it.end;
      return html`<svg class="cell" width=${w} height="84" viewBox="0 0 ${w} 84">
        ${i === 0 ? svg`<defs>
          <linearGradient id="fb" x2="0" y2="1"><stop stop-color="#35c8fa"/><stop offset="1" stop-color="#1f74ee"/></linearGradient>
          <linearGradient id="sf" x2="0" y2="1"><stop stop-color="#2bc5f4"/><stop offset="1" stop-color="#1d6fe6"/></linearGradient>
          <linearGradient id="rk" x2="0" y2="1"><stop stop-color="#c5ced4"/><stop offset="1" stop-color="#7f8a91"/></linearGradient>
          <linearGradient id="it" x2="0" y2="1"><stop stop-color="#f9516a"/><stop offset=".5" stop-color="#b764e8"/><stop offset="1" stop-color="#35b8f5"/></linearGradient>
          <linearGradient id="nt" x2="0" y2="1"><stop stop-color="#f9516a"/><stop offset="1" stop-color="#5f6cf2"/></linearGradient>
          <linearGradient id="ib" x2="0" y2="1"><stop stop-color="#fbaa2d"/><stop offset="1" stop-color="#e4511b"/></linearGradient>
          <linearGradient id="as" x2="0" y2="1"><stop stop-color="#27c0fb"/><stop offset="1" stop-color="#1d66ef"/></linearGradient></defs>` : nothing}
        <g transform="translate(${x} ${it.y - 1716})">${it.art}</g>
        ${it.dot ? svg`<circle cx=${x + 27} cy="77" r="3.200" fill=${it.x < 500 ? "#0b1f55" : "#5c5a5e"}/>` : nothing}
      </svg>`;
    })}`;
  }
}

/* ------------------------------------------------------------- desktop */

@customElement("app-root")
class AppRoot extends LitElement {
  static styles = css`
    :host { display: block; position: relative; width: 2880px; height: 1800px; overflow: hidden;
      background: linear-gradient(90deg, #41699f 0, #4a76b5 60px, #8a9ab5 700px, #d8d8d8 1200px, #bbb 2830px, #dedede 2880px); }
    .top { background: #2d4d7c; }
    .win { position: relative; z-index: 3; height: 1650px; border-radius: 10px 10px 12px 12px; overflow: hidden; box-shadow: 0 0 3px #333, 0 8px 24px rgba(0,0,0,.45); background: #fff; }
    .mid, .low { position: absolute; left: 0; width: 2868px; top: 1600px; height: 106px; border-radius: 0 0 14px 14px; background: linear-gradient(90deg, #b4b4b4, #8e8e8e 120px); z-index: 2; overflow: hidden; box-shadow: 0 1px 3px #333; display: flex; align-items: flex-end; }
    .pic { height: 10px; }
    .p1 { width: 746px; margin-left: 235px; background: linear-gradient(90deg, #040404, #1a1a1a 300px, #4c4c4c 430px, #232323 520px, #050505); }
    .p2 { width: 752px; margin-left: 62px; background: linear-gradient(90deg, #2f2f2f, #6a6a6a 180px, #474747 230px, #808080 330px, #5c5c5c 420px, #858585 600px, #8a8a8a 720px, #5a5a5a); }
    .p3 { width: 757px; margin-left: 62px; background: linear-gradient(90deg, #3c301c, #55401f 200px, #5c4526 400px, #3b3823 500px, #54401f); }
    .low { left: 20px; width: 2790px; height: 118px; background: #707070; z-index: 1; }
    .info { height: 12px; overflow: hidden; display: flex; align-items: flex-start; padding-left: 17px; gap: 10px; font: 500 25px/28px Inter, sans-serif; color: #151515; }
    .info svg { margin-top: 5px; }
    .panel { width: 188px; height: 10px; margin: 0 0 2px 22px; background: #858585; border-right: 1px solid #4c4c4c; border-radius: 0 0 0 8px; }
    .shade { position: absolute; left: 2810px; top: 1700px; width: 70px; height: 100px; background: linear-gradient(110deg, #6f6f6f, #c9c9c9 50%, #f2f2f2); }
    .dock { position: absolute; z-index: 4; left: 48px; top: 1716px; }
  `;
  render() {
    return html`
      <div class="top"><menu-bar></menu-bar></div>
      <div class="win"><tab-strip></tab-strip><tool-bar></tool-bar><web-page></web-page></div>
      <div class="shade"></div>
      <div class="low"><div class="info">
        <svg width="18" height="12" viewBox="0 0 18 12"><path d="M0 0H18L9 16Z" fill="#3c3c3c"/></svg>
        ${fit("Udostępnianie i uprawnienia", 290)}</div><div class="panel"></div></div>
      <div class="mid"><div class="pic p1"></div><div class="pic p2"></div><div class="pic p3"></div></div>
      <app-dock class="dock"></app-dock>`;
  }
}
